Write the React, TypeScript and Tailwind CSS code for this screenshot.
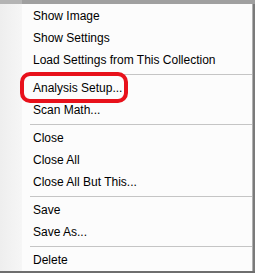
const items: (string | null)[] = [
  "Show Image",
  "Show Settings",
  "Load Settings from This Collection",
  null,
  "Analysis Setup...",
  "Scan Math...",
  null,
  "Close",
  "Close All",
  "Close All But This...",
  null,
  "Save",
  "Save As...",
  null,
  "Delete",
];

export default function App() {
  return (
    <div className="relative flex h-[273px] w-[255px] flex-col overflow-hidden bg-white font-['Liberation_Sans',Arial,sans-serif] text-[12px] text-black">
      <div className="flex h-[4px] w-full">
        <div className="w-[22px] bg-[#b4b4b4]" />
        <div className="flex-1 bg-[#a0a0a0]" />
      </div>
      <div className="flex flex-1">
        <div className="w-[22px] bg-gradient-to-r from-[#eeeeee] to-[#f6f6f6]" />
        <div className="flex flex-1 flex-col bg-[#fcfcfc] pt-[1px]">
          {items.map((label, i) =>
            label === null ? (
              <div key={i} className="flex h-[6px] items-center pl-[8px]">
                <div className="h-px w-full bg-[#c5c5c5]" />
              </div>
            ) : (
              <div key={i} className="flex h-[22px] items-center pl-[11px] whitespace-nowrap">
                {label}
              </div>
            )
          )}
        </div>
        <div className="w-[1px] bg-[#b0b0b0]" />
        <div className="w-[2px] bg-[#7a7a7a]" />
      </div>
      <div className="h-[2px] w-full bg-[#6e6e6e]" />
      <div className="absolute left-[20px] top-[72px] h-[31px] w-[108px] rounded-[10px] border-[4px] border-[#e8111b]" />
    </div>
  );
}
